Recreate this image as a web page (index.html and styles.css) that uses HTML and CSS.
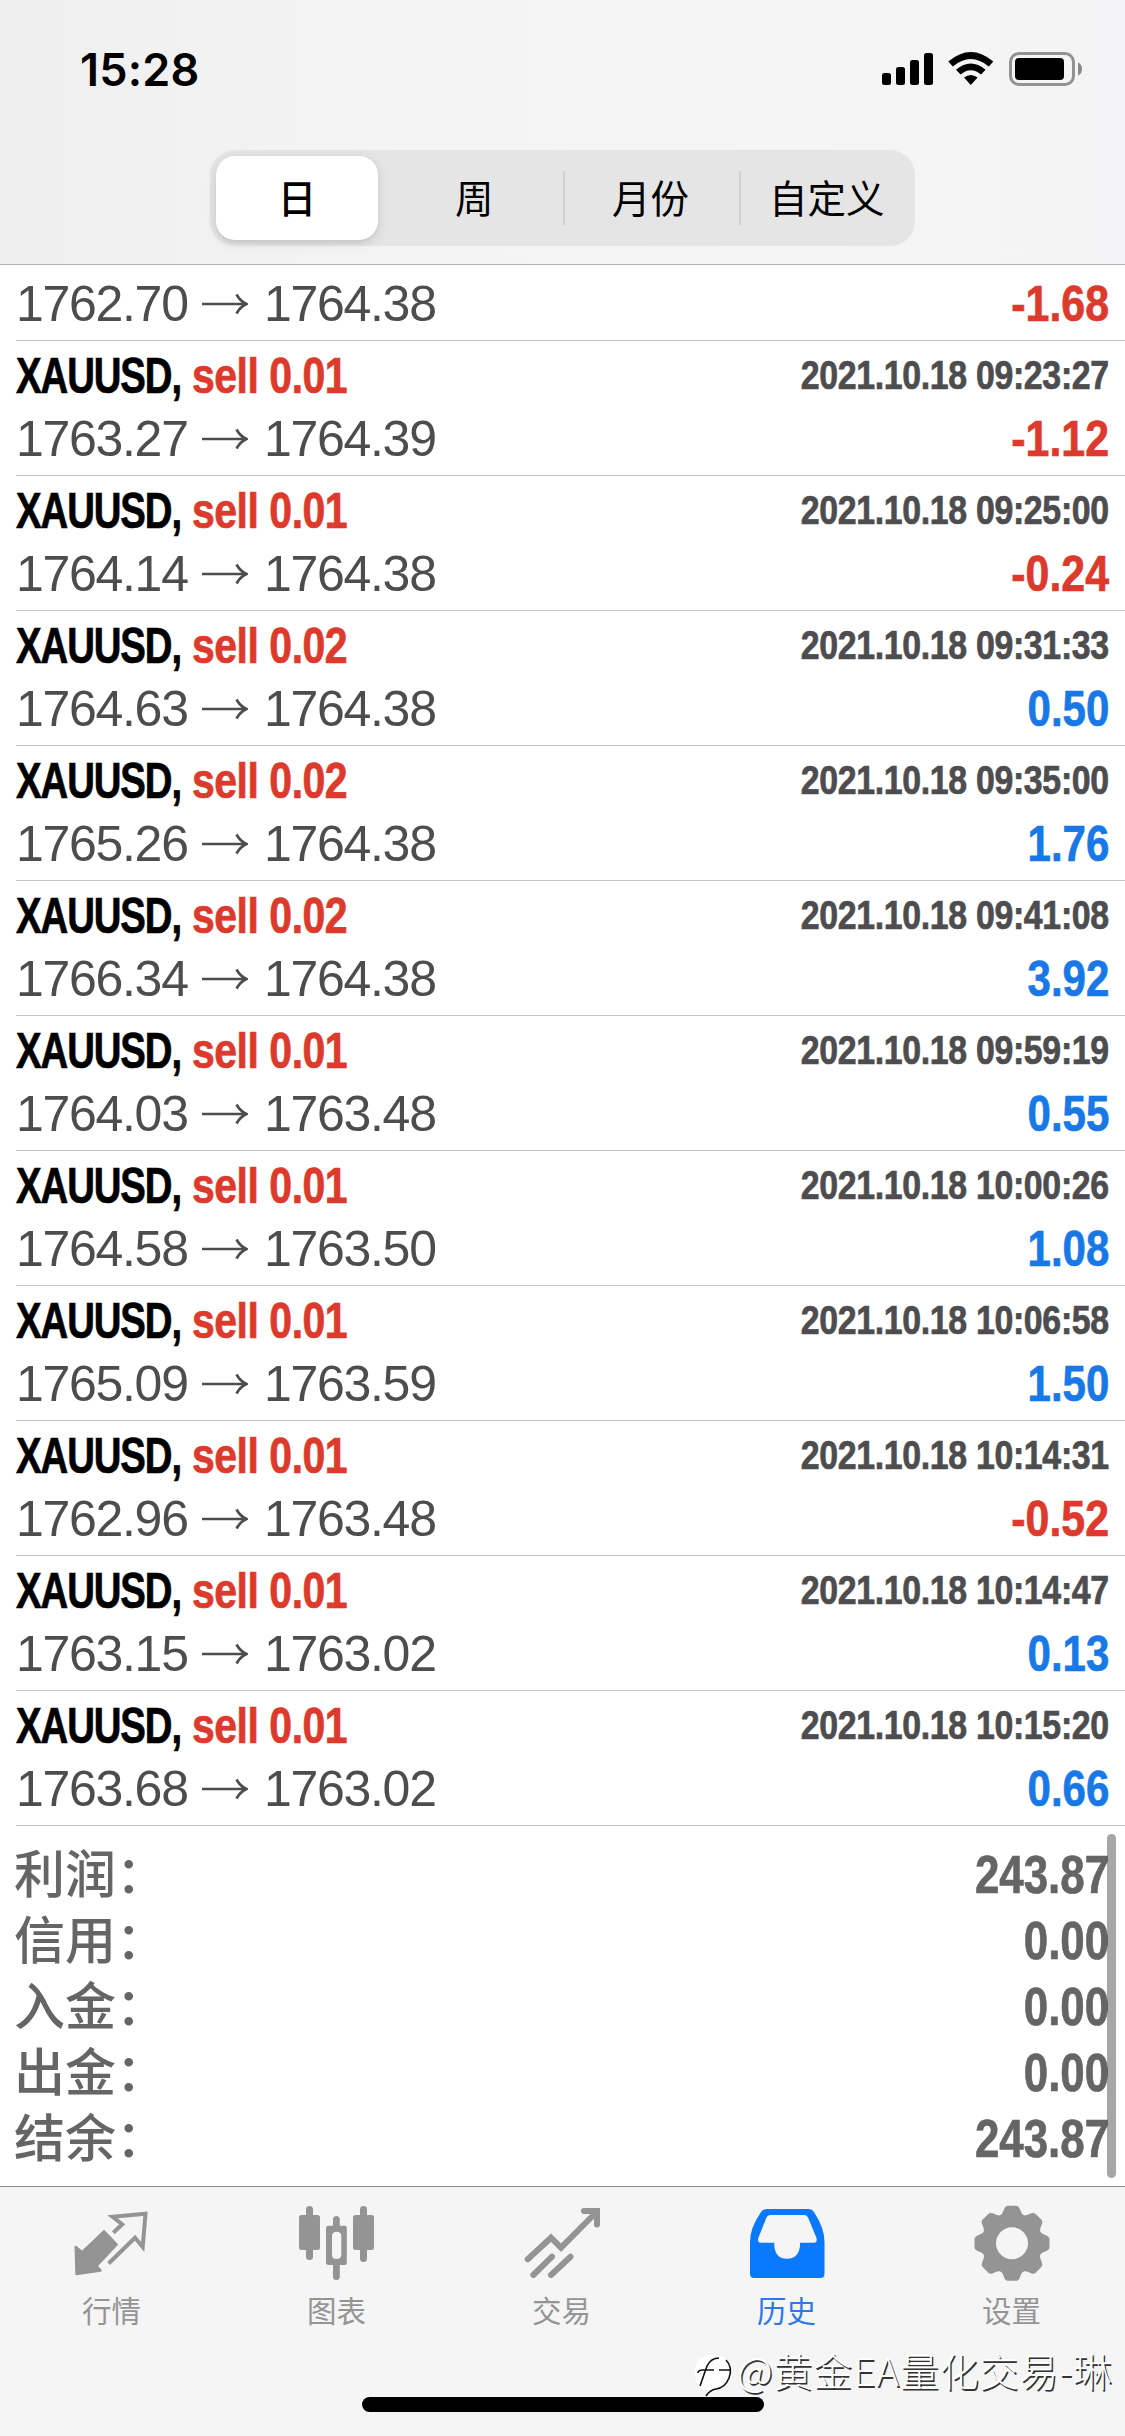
FILE: index.html
```html
<!DOCTYPE html>
<html lang="zh-CN">
<head>
<meta charset="utf-8">
<title>历史</title>
<link rel="stylesheet" href="styles.css">
</head>
<body>
<svg class="defs" aria-hidden="true">
  <symbol id="arrow" viewBox="0 0 46 24"><path d="M0 12H44M34.5 2.5Q38.5 9.5 44.5 12Q38.5 14.500 34.5 21.500" fill="none" stroke="currentColor" stroke-width="2.700"/></symbol>
</svg>
<header class="header">
  <div class="status">
    <span class="time">15:28</span>
    <svg class="status-icons" width="202" height="36" viewBox="881 51 202 36">
      <rect x="882" y="73" width="9" height="12" rx="2.500"/>
      <rect x="896" y="67" width="9" height="18" rx="2.500"/>
      <rect x="910" y="60" width="9" height="25" rx="2.500"/>
      <rect x="924" y="53" width="9" height="32" rx="2.500"/>
      <path d="M948.300 61.500Q970.800 42.500 993.300 61.500L988.800 66.500Q970.800 51.500 952.800 66.500Z"/>
      <path d="M956 69.700Q970.800 57.500 985.600 69.700L981 74.500Q970.800 66 960.600 74.500Z"/>
      <path d="M964 77.500Q970.800 72.500 977.600 77.500L970.800 85Z"/>
      <rect x="1010.500" y="53.500" width="63" height="31" rx="8.500" fill="none" stroke="#929292" stroke-width="3"/>
      <rect x="1015" y="58" width="49" height="22" rx="4"/>
      <path d="M1078 62.500Q1082 64 1082 69T1078 75.500Z" fill="#8a8a8a"/>
    </svg>
  </div>
  <nav class="segments">
    <span class="segment selected">日</span>
    <span class="segment">周</span>
    <span class="segment divided">月份</span>
    <span class="segment divided">自定义</span>
  </nav>
</header>
<main class="list">
  <div class="row partial"><div class="line prices"><span class="price">1762.70</span><svg class="arrow"><use href="#arrow"/></svg><span class="price">1764.38</span><span class="profit loss">-1.68</span></div></div>
  <div class="row"><div class="line"><span class="symbol">XAUUSD,</span><span class="side">sell 0.01</span><span class="date">2021.10.18 09:23:27</span></div><div class="line prices"><span class="price">1763.27</span><svg class="arrow"><use href="#arrow"/></svg><span class="price">1764.39</span><span class="profit loss">-1.12</span></div></div>
  <div class="row"><div class="line"><span class="symbol">XAUUSD,</span><span class="side">sell 0.01</span><span class="date">2021.10.18 09:25:00</span></div><div class="line prices"><span class="price">1764.14</span><svg class="arrow"><use href="#arrow"/></svg><span class="price">1764.38</span><span class="profit loss">-0.24</span></div></div>
  <div class="row"><div class="line"><span class="symbol">XAUUSD,</span><span class="side">sell 0.02</span><span class="date">2021.10.18 09:31:33</span></div><div class="line prices"><span class="price">1764.63</span><svg class="arrow"><use href="#arrow"/></svg><span class="price">1764.38</span><span class="profit">0.50</span></div></div>
  <div class="row"><div class="line"><span class="symbol">XAUUSD,</span><span class="side">sell 0.02</span><span class="date">2021.10.18 09:35:00</span></div><div class="line prices"><span class="price">1765.26</span><svg class="arrow"><use href="#arrow"/></svg><span class="price">1764.38</span><span class="profit">1.76</span></div></div>
  <div class="row"><div class="line"><span class="symbol">XAUUSD,</span><span class="side">sell 0.02</span><span class="date">2021.10.18 09:41:08</span></div><div class="line prices"><span class="price">1766.34</span><svg class="arrow"><use href="#arrow"/></svg><span class="price">1764.38</span><span class="profit">3.92</span></div></div>
  <div class="row"><div class="line"><span class="symbol">XAUUSD,</span><span class="side">sell 0.01</span><span class="date">2021.10.18 09:59:19</span></div><div class="line prices"><span class="price">1764.03</span><svg class="arrow"><use href="#arrow"/></svg><span class="price">1763.48</span><span class="profit">0.55</span></div></div>
  <div class="row"><div class="line"><span class="symbol">XAUUSD,</span><span class="side">sell 0.01</span><span class="date">2021.10.18 10:00:26</span></div><div class="line prices"><span class="price">1764.58</span><svg class="arrow"><use href="#arrow"/></svg><span class="price">1763.50</span><span class="profit">1.08</span></div></div>
  <div class="row"><div class="line"><span class="symbol">XAUUSD,</span><span class="side">sell 0.01</span><span class="date">2021.10.18 10:06:58</span></div><div class="line prices"><span class="price">1765.09</span><svg class="arrow"><use href="#arrow"/></svg><span class="price">1763.59</span><span class="profit">1.50</span></div></div>
  <div class="row"><div class="line"><span class="symbol">XAUUSD,</span><span class="side">sell 0.01</span><span class="date">2021.10.18 10:14:31</span></div><div class="line prices"><span class="price">1762.96</span><svg class="arrow"><use href="#arrow"/></svg><span class="price">1763.48</span><span class="profit loss">-0.52</span></div></div>
  <div class="row"><div class="line"><span class="symbol">XAUUSD,</span><span class="side">sell 0.01</span><span class="date">2021.10.18 10:14:47</span></div><div class="line prices"><span class="price">1763.15</span><svg class="arrow"><use href="#arrow"/></svg><span class="price">1763.02</span><span class="profit">0.13</span></div></div>
  <div class="row"><div class="line"><span class="symbol">XAUUSD,</span><span class="side">sell 0.01</span><span class="date">2021.10.18 10:15:20</span></div><div class="line prices"><span class="price">1763.68</span><svg class="arrow"><use href="#arrow"/></svg><span class="price">1763.02</span><span class="profit">0.66</span></div></div>
</main>
<section class="summary">
  <div class="total"><span class="label">利润：</span><span class="amount">243.87</span></div>
  <div class="total"><span class="label">信用：</span><span class="amount">0.00</span></div>
  <div class="total"><span class="label">入金：</span><span class="amount">0.00</span></div>
  <div class="total"><span class="label">出金：</span><span class="amount">0.00</span></div>
  <div class="total"><span class="label">结余：</span><span class="amount">243.87</span></div>
  <i class="scrollbar"></i>
</section>
<footer class="footer">
  <nav class="tabs">
    <div class="tab">
      <svg width="76" height="80" viewBox="0 0 76 80"><path d="M1.800 43L8 48.300L30 27.300L42.700 40.500L22.500 62L26.500 66.500L2.500 70Z" fill="currentColor" stroke="currentColor" stroke-width="2.500" stroke-linejoin="round"/><path d="M39.300 28.700L48.200 20.300L38.500 12.700L71.500 9.800L68.700 43L61 33.700L34.600 59.500" fill="none" stroke="currentColor" stroke-width="4"/></svg>
      <span>行情</span>
    </div>
    <div class="tab">
      <svg width="76" height="80" viewBox="0 0 76 80" fill="currentColor"><rect y="11" width="21" height="35" rx="2.500"/><rect x="7" y="2" width="7" height="54" rx="3.500"/><path fill-rule="evenodd" d="M29.500 21.700H45.500Q47.800 21.700 47.800 24V59Q47.800 61 45.500 61H29.500Q27 61 27 59V24Q27 21.700 29.500 21.700ZM37.500 27.700Q33 27.700 33 32.200V51Q33 55 37.500 55T42.300 51V32.200Q42.300 27.700 37.500 27.700Z"/><path d="M34 24V15.500Q34 12 37.400 12T40.800 15.500V24ZM34 58V72.500Q34 76 37.400 76T40.800 72.500V58Z"/><rect x="54" y="11" width="21" height="35" rx="2.500"/><rect x="61" y="2" width="7" height="56" rx="3.500"/></svg>
      <span>图表</span>
    </div>
    <div class="tab">
      <svg width="76" height="80" viewBox="0 0 76 80" fill="none" stroke="currentColor" stroke-width="6"><path d="M3.700 55.300L27 33.700L37 43.700L72 8.500M9.300 71L28 52.700M27 71L46.500 52.700" stroke-linecap="round"/><path d="M60 7H73V20.500" stroke-linecap="round"/></svg>
      <span>交易</span>
    </div>
    <div class="tab active">
      <svg width="76" height="80" viewBox="0 0 76 80"><path fill="currentColor" fill-rule="evenodd" d="M18 5H59.500Q63 5 65 8Q75.500 24 75.500 38V69.500Q75.500 74 71.500 74H5Q1 74 1 69.500V38Q1 24 12 8Q14 5 18 5ZM21 11Q18.500 11 17.500 13.500L9.300 34Q8 38.700 12 38.700H25.300V42Q26.500 54.700 38 54.700T51 42V38.700H65Q68.500 38.700 67.500 34L59 13.500Q58 11 55.500 11Z"/></svg>
      <span>历史</span>
    </div>
    <div class="tab">
      <svg width="76" height="80" viewBox="0 0 76 80" fill="currentColor"><defs><path id="tooth" d="M-13 -27Q-9.500 -29 -8.300 -33Q-7 -37.500 -4 -37.500H4Q7 -37.500 8.300 -33Q9.500 -29 13 -27L8 -18H-8Z"/></defs><g transform="translate(38 39.300)"><path fill-rule="evenodd" d="M-30 0A30 30 0 0 1 30 0A30 30 0 0 1 -30 0ZM-16 0A16 16 0 0 0 16 0A16 16 0 0 0 -16 0Z"/><use href="#tooth"/><use href="#tooth" transform="rotate(45)"/><use href="#tooth" transform="rotate(90)"/><use href="#tooth" transform="rotate(135)"/><use href="#tooth" transform="rotate(180)"/><use href="#tooth" transform="rotate(225)"/><use href="#tooth" transform="rotate(270)"/><use href="#tooth" transform="rotate(315)"/></g></svg>
      <span>设置</span>
    </div>
  </nav>
  <div class="home"></div>
  <div class="watermark">
    <svg width="44" height="48" viewBox="0 0 44 48"><path d="M2 22Q2 4 20 4Q38 4 38 21Q38 36 22 40L13 45L17 39Q2 39 2 22Z" fill="#fff"/><path d="M7 35L14 15Q18 7 26 7M5 22Q5 19 10 19H21M26 19H37" fill="none" stroke="#111" stroke-width="1.600"/><path d="M33 9Q40 16 36 27Q32 37 23 38Q17 39 13 45" fill="none" stroke="#111" stroke-width="1.600"/></svg>
    <span>@黄金EA量化交易-琳</span>
  </div>
</footer>
</body>
</html>
```
FILE: styles.css
```css
* { box-sizing: border-box; }
body {
  margin: 0;
  width: 1125px;
  height: 2436px;
  display: flex;
  flex-direction: column;
  overflow: hidden;
  background: #fff;
  font-family: "Liberation Sans", "Noto Sans CJK SC", sans-serif;
}
svg { display: block; flex: none; }
.defs { position: absolute; width: 0; height: 0; }

.header {
  height: 265px;
  border-bottom: 1px solid #b0b0b0;
  background: linear-gradient(90deg, #efeff0, #f5f4f4 34%, #f5f5f5 70%, #f4f4f6);
}
.status {
  height: 150px;
  padding: 51px 42px 0 80px;
  display: flex;
  justify-content: space-between;
  align-items: flex-start;
}
.time {
  font: 600 45px/37px Inter, sans-serif;
  letter-spacing: 0.200px;
}
.segments {
  width: 705px;
  height: 96px;
  margin: 0 auto;
  display: grid;
  grid-template-columns: repeat(4, 1fr);
  border-radius: 25px;
  background: #e5e5e6;
  font-family: "Noto Sans CJK SC", sans-serif;
  font-size: 38.500px;
}
.segment {
  display: flex;
  align-items: center;
  justify-content: center;
  padding-bottom: 4px;
}
.divided {
  background: linear-gradient(#d0d0d2, #d0d0d2) left 0 center / 2px 54px no-repeat;
}
.selected {
  margin: 6px 8px 6px 6px;
  border-radius: 19px;
  background: #fff;
  font-weight: 500;
  box-shadow: 0 3px 12px rgba(0, 0, 0, 0.12), 0 3px 3px rgba(0, 0, 0, 0.04);
}

.row {
  height: 135px;
  margin-left: 16px;
  padding: 4px 16px 0 0;
  border-bottom: 1px solid #c3c3c5;
}
.partial { height: 76px; padding-top: 8px; }
.line {
  height: 63px;
  display: flex;
  font-size: 50px;
  line-height: 63px;
  white-space: nowrap;
}
.symbol, .side, .profit, .date, .amount {
  font-weight: 700;
  -webkit-text-stroke: 0.700px currentColor;
}
.symbol {
  width: 176px;
  transform: scaleX(0.767);
  transform-origin: left;
  letter-spacing: -1.400px;
}
.side {
  color: #dc3a2c;
  transform: scaleX(0.82);
  transform-origin: left;
  letter-spacing: -0.600px;
}
.date, .profit { margin-left: auto; transform-origin: right; }
.date {
  color: #4d4d50;
  font-size: 40px;
  line-height: 61px;
  letter-spacing: -0.400px;
  transform: scaleX(0.847);
}
.prices { line-height: 62px; color: #4d4d4f; }
.price { width: 174px; letter-spacing: -1.300px; }
.arrow { width: 46px; height: 24px; margin: 19px 16px 0 12px; }
.profit { color: #1878e6; transform: scaleX(0.84); }
.loss { color: #dc3a2c; transform: scaleX(0.857); }

.summary {
  position: relative;
  height: 360px;
  padding: 11px 16px 0;
  color: #656565;
}
.total {
  height: 66px;
  display: flex;
  justify-content: space-between;
  align-items: flex-start;
  font: 500 51px/68px "Noto Sans CJK SC", sans-serif;
}
.label { margin-left: -2px; }
.amount {
  font: 700 53px/75px "Liberation Sans", sans-serif;
  transform: scaleX(0.828);
  transform-origin: right;
}
.scrollbar {
  position: absolute;
  top: 8px;
  right: 9px;
  width: 9px;
  height: 344px;
  border-radius: 5px;
  background: rgba(0, 0, 0, 0.35);
}

.footer {
  position: relative;
  height: 250px;
  border-top: 1px solid #8f8f8f;
  background: #f5f5f5;
}
.tabs {
  height: 210px;
  display: grid;
  grid-template-columns: repeat(5, 225px);
  margin-left: -1px;
}
.tab {
  display: flex;
  flex-direction: column;
  align-items: center;
  padding-top: 17px;
  gap: 3px;
  color: #949494;
  font: 400 29.500px/44px "Noto Sans CJK SC", sans-serif;
}
.active { color: #0b79fb; }
.active span { color: #2c78e4; }
.home {
  width: 402px;
  height: 15px;
  margin: 0 auto;
  border-radius: 8px;
  background: #000;
}
.watermark {
  position: absolute;
  left: 693px;
  top: 164px;
  display: flex;
  align-items: flex-start;
  color: #fff;
  font: 300 39px/48px "Noto Sans CJK SC", sans-serif;
  letter-spacing: 0.800px;
  white-space: nowrap;
  text-shadow: 1.500px 1.500px 0 #333;
}
.watermark span { margin-top: -6px; }
```
